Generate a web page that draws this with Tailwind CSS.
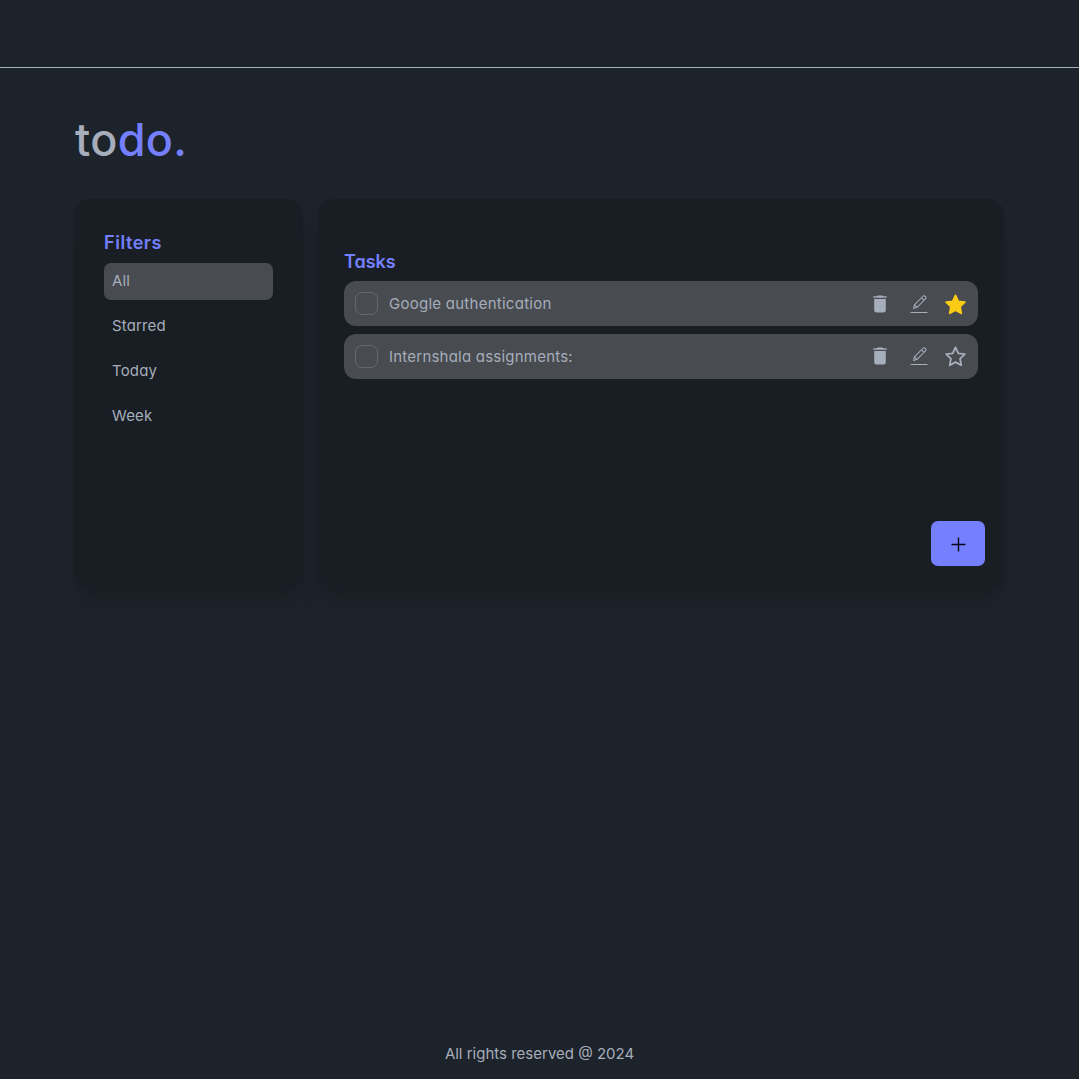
<!DOCTYPE html>
<html lang="en">
<head>
<meta charset="utf-8">
<title>todo.</title>
<script src="https://cdn.jsdelivr.net/npm/@tailwindcss/browser@4"></script>
</head>
<body class="flex min-h-screen flex-col bg-[#1d232a] font-['Inter',sans-serif] text-[15px] leading-[22px] text-[#a6adbb] [font-feature-settings:'cv11']">
<svg class="hidden">
  <symbol id="trash" viewBox="0 0 18 20"><path fill="currentColor" d="M6 2.200 6.600 1.400h4.800l.6.8h3.600v1.600H2.400V2.200zM3.200 5h11.600v11.300c0 1.300-.8 2.100-2.100 2.100H5.300c-1.300 0-2.100-.8-2.100-2.100z"/></symbol>
  <symbol id="pencil" viewBox="0 0 18 20"><g fill="none" stroke="currentColor"><path stroke-width="1.050" stroke-linejoin="round" d="M4.400 10.800 12.700 2.500a1.700 1.700 0 0 1 2.700 0 1.700 1.700 0 0 1 0 2.500L7.100 13.300 3.500 14.500zM11.400 3.800l2.700 2.500M4.400 10.800l2.700 2.500"/><path d="M.5 18.500h17"/></g></symbol>
  <symbol id="star" viewBox="0 0 24 24"><path stroke="currentColor" stroke-width="1.900" stroke-linejoin="round" d="m12 2.500 2.900 6.200 6.900.9-5 4.700 1.200 6.900-6-3.300-6 3.300 1.200-6.900-5-4.700 6.900-.9z"/></symbol>
</svg>
<header class="h-[68px] border-b border-[#a6adbb]"></header>
<main class="grow px-[74px] pt-[46px]">
  <h1 class="h-[85px] pl-px text-[45px] leading-[52px] font-[460] tracking-[0.3px]">to<span class="text-[#7480ff]">do.</span></h1>
  <div class="flex h-[389px] gap-[15px]">
    <aside class="w-[229px] rounded-[16px] bg-[#191e24] px-[30px] pt-[31px] shadow-xl">
      <h2 class="text-[18px] leading-[26px] font-semibold tracking-[0.55px] text-[#7480ff]">Filters</h2>
      <ul class="mt-[7px] flex flex-col gap-2 tracking-[0.15px]">
        <li class="h-[37px] rounded-[7px] bg-[#484b4f] px-2 py-[7px]">All</li>
        <li class="h-[37px] px-2 py-[7px]">Starred</li>
        <li class="h-[37px] px-2 py-[7px]">Today</li>
        <li class="h-[37px] px-2 py-[7px]">Week</li>
      </ul>
    </aside>
    <section class="flex w-[686px] flex-col rounded-[16px] bg-[#191e24] px-[26px] pt-[50px] shadow-xl">
      <h2 class="text-[18px] leading-[26px] font-semibold text-[#7480ff]">Tasks</h2>
      <ul class="mt-[6px] flex flex-col gap-2">
        <li class="flex h-[45px] items-center rounded-[12px] bg-[#484b4f] pl-[11px] pr-[11px]">
          <span class="size-[23px] rounded-[7px] border border-[#65696f]"></span>
          <span class="ml-[11px] grow tracking-[0.26px]">Google authentication</span>
          <svg class="h-5 w-[18px]"><use href="#trash"/></svg>
          <svg class="ml-[21px] h-5 w-[18px]"><use href="#pencil"/></svg>
          <svg class="ml-[16px] mt-px size-[23px] fill-[#facc15] text-[#facc15]"><use href="#star"/></svg>
        </li>
        <li class="flex h-[45px] items-center rounded-[12px] bg-[#484b4f] pl-[11px] pr-[11px]">
          <span class="size-[23px] rounded-[7px] border border-[#65696f]"></span>
          <span class="ml-[11px] grow tracking-[0.22px]">Internshala assignments:</span>
          <svg class="mb-px h-5 w-[18px]"><use href="#trash"/></svg>
          <svg class="mb-px ml-[21px] h-5 w-[18px]"><use href="#pencil"/></svg>
          <svg class="ml-[16px] size-[23px] fill-none"><use href="#star"/></svg>
        </li>
      </ul>
      <button class="mt-auto mr-[-7px] mb-[22px] flex h-[45px] w-[54px] items-center justify-center self-end rounded-[7px] bg-[#7480ff] pt-px text-[#050617]">
        <svg class="size-[15px]" viewBox="0 0 15 15"><path stroke="currentColor" stroke-width="1.400" d="M7.500.5v14M.5 7.500h14"/></svg>
      </button>
    </section>
  </div>
</main>
<footer class="flex h-[50px] justify-center pt-[14px]">All rights reserved @ 2024</footer>
</body>
</html>
